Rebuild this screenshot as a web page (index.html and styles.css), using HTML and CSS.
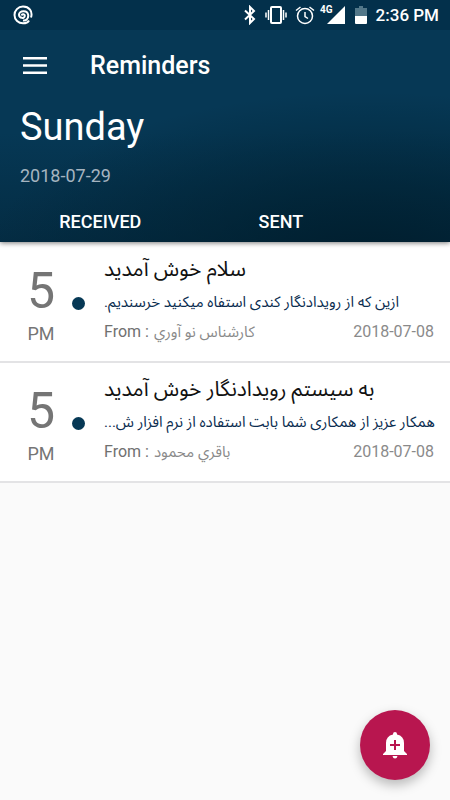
FILE: index.html
```html
<!DOCTYPE html>
<html lang="en">
<head>
<meta charset="utf-8">
<meta name="viewport" content="width=device-width, initial-scale=1">
<title>Reminders</title>
<link rel="stylesheet" href="styles.css">
</head>
<body>
<header class="header">
  <div class="status">
    <svg class="swirl" width="20" height="20" viewBox="0 0 20 20" aria-hidden="true"><path d="M8.500 10.500C9 8.600 12 9 11.800 11C11.500 13.800 6.300 13.500 6 10C5.800 5.300 14.600 4.500 15.200 10C15.700 13 13.500 15 11.500 15.500M18 12.500C20 6 16 1.600 10 1.600C5 1.600 1.500 5.500 1.500 10C1.500 15 5.500 18.300 10 18.300C12.500 18.300 15 17.500 16 15.500M15.200 10.500C15.200 14 13 16 10 15.500"/></svg>
    <div class="status-right">
      <svg width="14" height="20" viewBox="0 0 14 20" aria-hidden="true"><path class="line" d="M2 5.500L11 14L7 18V2L11 6L2 14.500"/></svg>
      <svg class="vibrate" width="22" height="20" viewBox="0 0 22 20" aria-hidden="true"><rect class="line" x="6" y="2" width="10" height="16" rx="1"/><path class="line thin" d="M3.500 5v10M18.500 5v10M1 7.500v5M21 7.500v5"/></svg>
      <svg class="alarm" width="20" height="20" viewBox="0 0 20 20" aria-hidden="true"><circle class="line thin" cx="10" cy="11" r="7.500"/><path class="line thin" d="M10 7v4.500l3 2M1 5.500L5.500 2M19 5.500L14.500 2"/></svg>
      <span class="network">4G</span>
      <svg class="signal" width="18" height="18" viewBox="0 0 18 18" aria-hidden="true"><path class="fill" d="M0 18L18 0V18Z"/></svg>
      <svg class="battery" width="12" height="20" viewBox="0 0 12 20" aria-hidden="true"><path class="dim" d="M4 1h4v2h4v8H0V3h4Z"/><path class="fill" d="M0 11h12v7q0 1-1 1H1q-1 0-1-1Z"/></svg>
      <span class="clock">2:36 PM</span>
    </div>
  </div>
  <div class="toolbar">
    <button class="menu" type="button" aria-label="Menu"><svg width="24" height="18" viewBox="0 0 24 18" aria-hidden="true"><path class="fill" d="M0 0h24v2.500H0zM0 7.200h24v2.500H0zM0 14.400h24v2.500H0z"/></svg></button>
    <h1 class="title">Reminders</h1>
  </div>
  <p class="day">Sunday</p>
  <p class="date">2018-07-29</p>
  <nav class="tabs">
    <button class="tab" type="button">Received</button>
    <button class="tab" type="button">Sent</button>
  </nav>
</header>
<main class="list">
  <article class="item">
    <div class="time"><span class="hour">5</span><span class="half">PM</span></div>
    <span class="dot"></span>
    <div class="content">
      <h2 class="subject" dir="rtl" lang="fa">سلام خوش آمدید</h2>
      <p class="message" dir="rtl" lang="fa">ازین که از رویدادنگار کندی استفاه میکنید خرسندیم.</p>
      <div class="meta"><span class="from">From :</span><span class="sender" dir="rtl" lang="fa">كارشناس نو آوري</span><span class="sent">2018-07-08</span></div>
    </div>
  </article>
  <article class="item">
    <div class="time"><span class="hour">5</span><span class="half">PM</span></div>
    <span class="dot"></span>
    <div class="content">
      <h2 class="subject" dir="rtl" lang="fa">به سیستم رویدادنگار خوش آمدید</h2>
      <p class="message" dir="rtl" lang="fa">همکار عزیز از همکاری شما بابت استفاده از نرم افزار ش...</p>
      <div class="meta"><span class="from">From :</span><span class="sender" dir="rtl" lang="fa">باقري محمود</span><span class="sent">2018-07-08</span></div>
    </div>
  </article>
</main>
<button class="fab" type="button" aria-label="Add reminder"><svg width="24" height="28" viewBox="0 0 24 28" aria-hidden="true"><path class="fill" d="M12 1q2 0 2 2v.5q7 1.500 7 8.500v8l3 3v1H0v-1l3-3v-8q0-7 7-8.500V3q0-2 2-2ZM9.500 25h5q-.5 2.500-2.500 2.500t-2.500-2.500Z"/><path class="plus" d="M12 9v10M7 14h10"/></svg></button>
</body>
</html>
```
FILE: styles.css
```css
* { box-sizing: border-box; }
body {
  margin: 0;
  min-height: 100vh;
  background: #fafafa;
  font-family: Roboto, "Noto Sans Arabic", "Noto Naskh Arabic", "DejaVu Sans", sans-serif;
}
h1, h2, p { margin: 0; font-weight: 400; }
button { border: 0; padding: 0; background: none; color: inherit; font: inherit; cursor: pointer; }
svg { display: block; flex: none; }
.fill { fill: #fff; }
.dim { fill: #527789; }
.line { fill: none; stroke: #fff; stroke-width: 2; }
.thin { stroke-width: 1.5; }
.header {
  position: relative;
  color: #fff;
  background:
    radial-gradient(ellipse 85% 70% at 82% 108%, #001e2e 0%, #00203099 45%, #00203000 100%),
    linear-gradient(#063855 55%, #042c43);
  box-shadow: 0 1px 5px #0008;
}
.status {
  display: flex;
  justify-content: space-between;
  align-items: center;
  height: 30px;
  padding: 0 11px 0 13px;
  background: #00263c66;
}
.swirl { fill: none; stroke: #fff; stroke-width: 2; }
.status-right { display: flex; align-items: center; }
.vibrate { margin-left: 8px; }
.alarm { margin-left: 8px; }
.network { margin: 0 -6px 10px 5px; font-size: 10px; line-height: 12px; font-weight: 700; }
.signal { margin-right: 10px; }
.battery { margin-right: 9px; }
.clock { font-size: 17px; line-height: 24px; font-weight: 500; }
.toolbar { display: flex; align-items: center; height: 72px; padding: 0 23px; }
.menu { margin-right: 43px; }
.title { font-size: 25px; line-height: 32px; font-weight: 500; }
.day { padding: 2px 20px 0; font-size: 38px; line-height: 46px; }
.date { padding: 14px 20px 0; font-size: 18px; line-height: 24px; color: #a5b4c0; }
.tabs { display: flex; height: 54px; padding: 12px 10px 0; }
.tab { width: 42%; height: 42px; font-size: 18px; font-weight: 500; text-transform: uppercase; }
.list { padding-top: 1px; background: #fff; }
.item {
  display: flex;
  height: 120px;
  padding: 18px 16px 0 20px;
  background: #fff;
  border-bottom: 2px solid #e3e3e5;
}
.time { display: flex; flex-direction: column; align-items: center; width: 42px; color: #757575; }
.hour { font-size: 50px; line-height: 60px; }
.half { font-size: 18px; line-height: 26px; }
.dot { flex: none; width: 13px; height: 13px; margin: 36px 19px 0 10px; border-radius: 50%; background: #063855; }
.content { flex: 1; min-width: 0; }
.subject, .message { width: fit-content; white-space: nowrap; }
.subject { font-size: 21px; line-height: 28px; margin-top: -6px; color: #111; }
.message { margin-top: 6px; font-size: 15px; line-height: 26px; color: #0b2d50; }
.meta { display: flex; align-items: center; margin-top: 4px; line-height: 26px; color: #8a8a8a; }
.from { margin-right: 5px; font-size: 16px; color: #707070; }
.sender { font-size: 15px; }
.sent { margin-left: auto; font-size: 16px; }
.fab {
  position: fixed;
  right: 20px;
  bottom: 20px;
  display: grid;
  place-items: center;
  width: 70px;
  height: 70px;
  border-radius: 50%;
  background: #b8164f;
  box-shadow: 0 5px 12px #0004;
}
.plus { fill: none; stroke: #b8164f; stroke-width: 2; }
```
